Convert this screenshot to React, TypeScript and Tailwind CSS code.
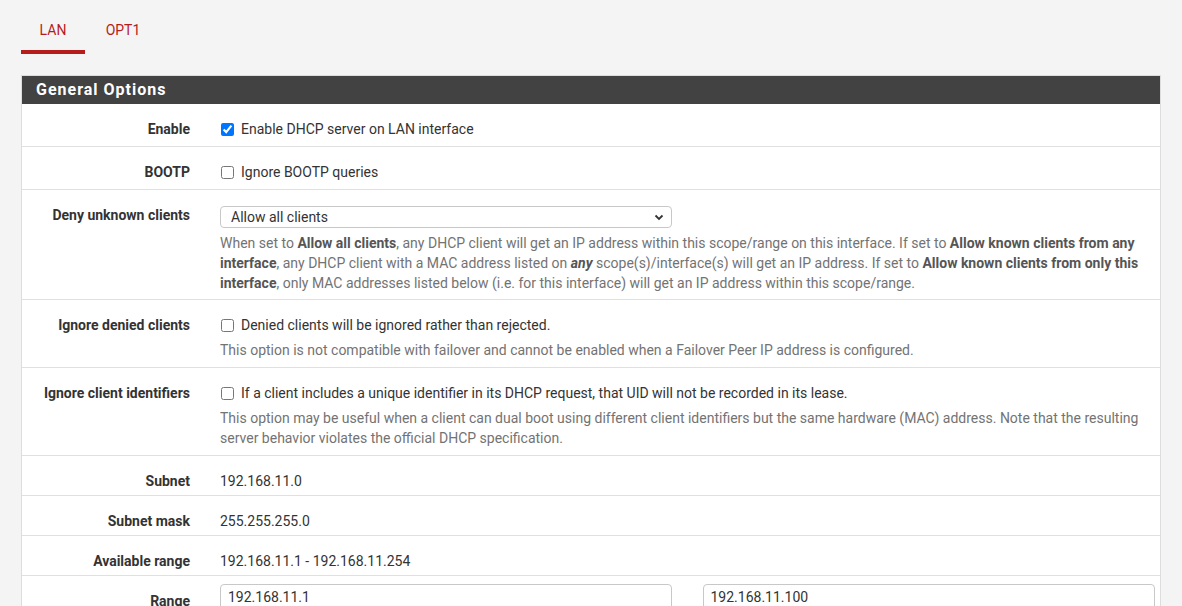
import React from "react";

const font = { fontFamily: "Roboto, 'Noto Sans', Arial, sans-serif" };

function Row({
  label,
  children,
  pb = "pb-[7px]",
}: {
  label: string;
  children: React.ReactNode;
  pb?: string;
}) {
  return (
    <div className={`flex border-b border-[#e0e0e0] pt-[15px] ${pb}`}>
      <div className="w-[168px] shrink-0 text-right text-[14px] font-bold leading-[20px] text-[#333]">
        {label}
      </div>
      <div className="ml-[30px] w-[935px] text-[14px] leading-[20px] text-[#333]">
        {children}
      </div>
    </div>
  );
}

function Check({ checked, text }: { checked?: boolean; text: string }) {
  return (
    <label className="flex items-center">
      <input
        type="checkbox"
        defaultChecked={checked}
        className="m-0 ml-[1px] h-[13px] w-[13px]"
      />
      <span className="ml-[7px]">{text}</span>
    </label>
  );
}

function Help({ children }: { children: React.ReactNode }) {
  return (
    <div className="mt-[5px] text-[14px] leading-[20px] text-[#737373]">{children}</div>
  );
}

export default function App() {
  return (
    <div style={font} className="min-h-[606px] w-[1182px] overflow-hidden bg-[#f4f4f4]">
      <div className="flex px-[21px] pt-[20px]">
        <div className="flex h-[34px] w-[64px] flex-col items-center">
          <span className="text-[14px] leading-[20px] text-[#b71c1c]">LAN</span>
          <div className="mt-auto h-[4px] w-full bg-[#b71c1c]" />
        </div>
        <div className="flex h-[34px] w-[76px] justify-center">
          <span className="text-[14px] leading-[20px] text-[#b71c1c]">OPT1</span>
        </div>
      </div>
      <div className="mx-[21px] mt-[21px] border border-[#dddddd] bg-white">
        <div className="h-[28px] bg-[#424242] pl-[14px] text-[16px] font-bold leading-[28px] tracking-[1px] text-white">
          General Options
        </div>
        <Row label="Enable">
          <Check checked text="Enable DHCP server on LAN interface" />
        </Row>
        <Row label="BOOTP">
          <Check text="Ignore BOOTP queries" />
        </Row>
        <Row label="Deny unknown clients" pb="pb-[6px]">
          <div className="mt-[1px] flex h-[22px] w-[452px] items-center justify-between rounded-[4px] border border-[#c8c8c8] pl-[10px] pr-[7px]">
            <span className="text-[14px]">Allow all clients</span>
            <svg width="10" height="7" viewBox="0 0 10 7">
              <path d="M1.5 1.5 L5 5 L8.5 1.5" fill="none" stroke="#333" strokeWidth="1.8" />
            </svg>
          </div>
          <Help>
            When set to <b className="text-[#555]">Allow all clients</b>, any DHCP client will get an IP address within this scope/range on this interface. If set to{" "}
            <b className="text-[#555]">Allow known clients from any interface</b>, any DHCP client with a MAC address listed on{" "}
            <b className="italic text-[#555]">any</b> scope(s)/interface(s) will get an IP address. If set to{" "}
            <b className="text-[#555]">Allow known clients from only this interface</b>, only MAC addresses listed below (i.e. for this interface) will get an IP address within this scope/range.
          </Help>
        </Row>
        <Row label="Ignore denied clients">
          <Check text="Denied clients will be ignored rather than rejected." />
          <Help>
            This option is not compatible with failover and cannot be enabled when a Failover Peer IP address is configured.
          </Help>
        </Row>
        <Row label="Ignore client identifiers">
          <Check text="If a client includes a unique identifier in its DHCP request, that UID will not be recorded in its lease." />
          <Help>
            This option may be useful when a client can dual boot using different client identifiers but the same hardware (MAC) address. Note that the resulting server behavior violates the official DHCP specification.
          </Help>
        </Row>
        <Row label="Subnet" pb="pb-[4px]">
          192.168.11.0
        </Row>
        <Row label="Subnet mask" pb="pb-[4px]">
          255.255.255.0
        </Row>
        <Row label="Available range" pb="pb-[4px]">
          192.168.11.1 - 192.168.11.254
        </Row>
        <div className="flex pt-[8px] pb-[10px]">
          <div className="w-[168px] shrink-0 pt-[7px] text-right text-[14px] font-bold leading-[20px] text-[#333]">
            Range
          </div>
          <div className="ml-[30px] flex w-[935px] gap-[31px]">
            <div className="flex h-[26px] w-[452px] items-center rounded-[4px] border border-[#c8c8c8] pl-[7px] text-[14px] text-[#333]">
              192.168.11.1
            </div>
            <div className="flex h-[26px] w-[453px] items-center rounded-[4px] border border-[#c8c8c8] pl-[7px] text-[14px] text-[#333]">
              192.168.11.100
            </div>
          </div>
        </div>
      </div>
    </div>
  );
}
